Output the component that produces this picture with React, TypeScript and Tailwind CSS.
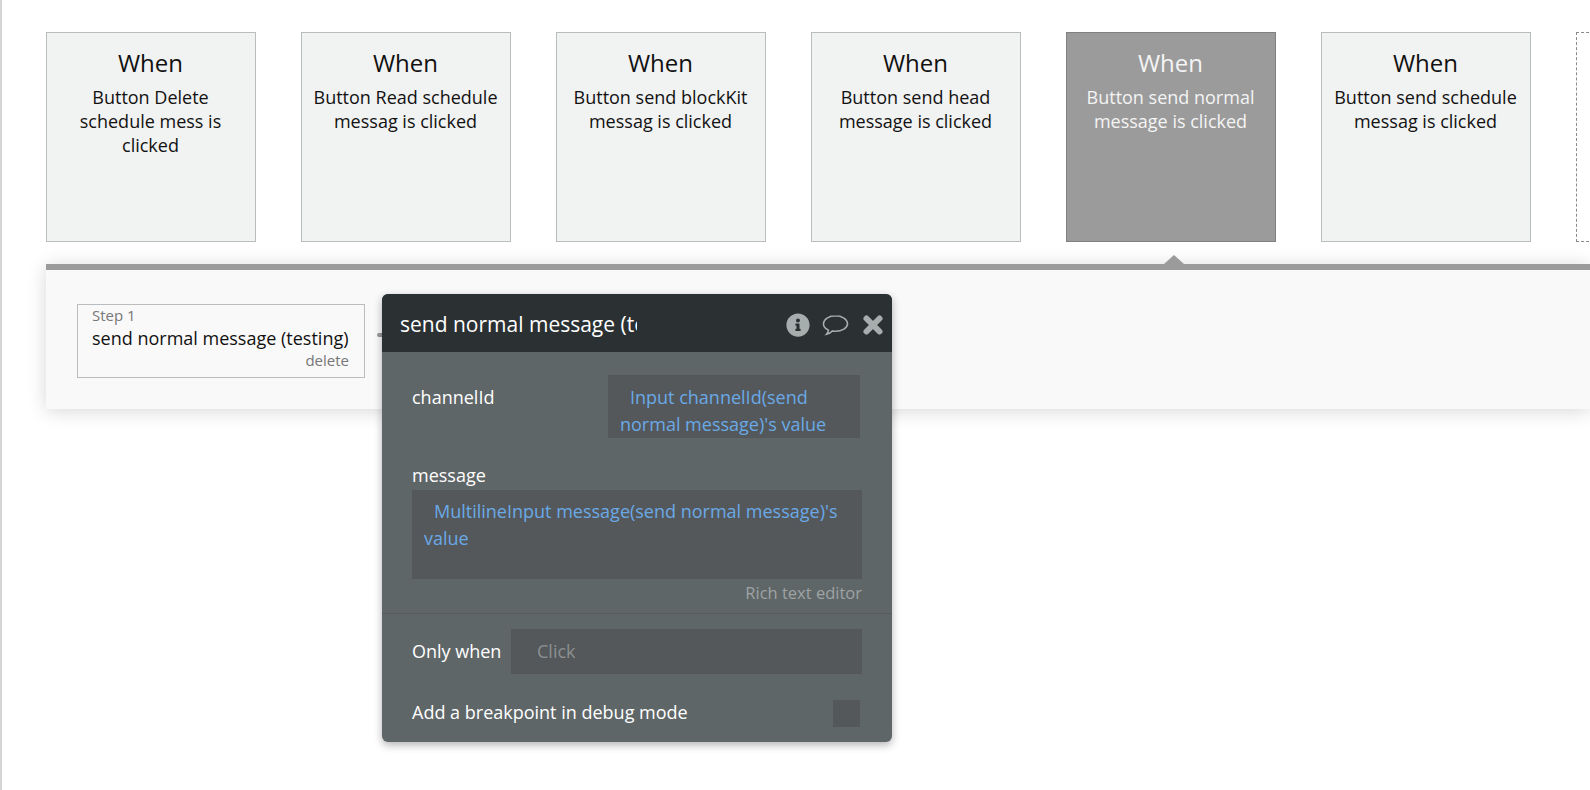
import { FaInfoCircle } from "react-icons/fa";

const cards = [
  { text: "Button Delete schedule mess is clicked" },
  { text: "Button Read schedule messag is clicked" },
  { text: "Button send blockKit messag is clicked" },
  { text: "Button send head message is clicked" },
  { text: "Button send normal message is clicked", active: true },
  { text: "Button send schedule messag is clicked" },
];

function EventCard({ text, active }: { text: string; active?: boolean }) {
  return (
    <div
      className={
        active
          ? "w-[210px] h-[210px] shrink-0 border border-[#7f8080] bg-[#9b9b9b] text-[#f4f4f4] pl-[8px] pr-[9px] pt-[12px] text-center"
          : "w-[210px] h-[210px] shrink-0 border border-[#b9bdbd] bg-[#f1f2f2] text-[#111111] pl-[8px] pr-[9px] pt-[12px] text-center"
      }
    >
      <div className="text-[24px] leading-[36px]">When</div>
      <div className="mt-[4px] text-[18px] leading-[24px]">{text}</div>
    </div>
  );
}

function Popup() {
  return (
    <div className="absolute left-[380px] top-[294px] w-[510px] h-[448px] rounded-[6px] overflow-hidden bg-[#5f6668] text-white shadow-[0_3px_8px_rgba(0,0,0,0.3)]">
      <div className="h-[58px] bg-[#2b3133] flex items-center pl-[18px] pr-[7px] pt-[3px]">
        <div className="w-[237px] overflow-hidden whitespace-nowrap text-[21px]">
          send normal message (testing)
        </div>
        <div className="ml-auto flex items-center text-[#a5adad]">
          <FaInfoCircle className="w-[24px] h-[24px]" />
          <svg viewBox="0 0 28 24" className="ml-[12px] w-[27px] h-[24px]" fill="none" stroke="currentColor" strokeWidth="1.6">
            <path d="M14 2.500C7.400 2.500 1.500 6 1.500 10.800c0 2.800 2.200 5.200 5.200 6.500-.3 1.600-1 3-2 4.200 2.400-.6 4.600-1.800 6.200-3.400 1 .2 2 .3 3.100.3 6.600 0 12.500-3.200 12.500-7.600C26.500 6 20.600 2.500 14 2.500z" />
          </svg>
          <svg viewBox="0 0 24 24" className="ml-[12px] w-[24px] h-[24px]" fill="none" stroke="currentColor" strokeWidth="6" strokeLinecap="round">
            <path d="M5.500 5.500l13 13M18.500 5.500l-13 13" />
          </svg>
        </div>
      </div>

      <div className="px-[30px] pt-[23px]">
        <div className="flex justify-between pr-[2px]">
          <div className="text-[18px] leading-[44px]">channelId</div>
          <div className="w-[252px] h-[63px] bg-[#54585b] pl-[12px] text-[18px] leading-[27px] pt-[9px] overflow-hidden text-[#6aa9e6] indent-[10px]">
            Input channelId(send normal message)'s value
          </div>
        </div>

        <div className="mt-[24px] text-[18px] leading-[26px]">message</div>
        <div className="mt-[2px] h-[89px] bg-[#54585b] px-[12px] pt-[8px] text-[18px] leading-[27px] text-[#6aa9e6] indent-[10px]">
          MultilineInput message(send normal message)'s value
        </div>
        <div className="mt-[2px] text-right text-[16.5px] leading-[24px] text-[#9ea3a4]">Rich text editor</div>
      </div>

      <div className="mt-[8px] border-t border-[#565c5e]" />

      <div className="px-[30px] pt-[15px]">
        <div className="flex items-center">
          <div className="text-[18px] w-[99px]">Only when</div>
          <div className="flex-1 h-[45px] bg-[#54585b] pl-[26px] flex items-center text-[18px] text-[#8b8f90]">Click</div>
        </div>
        <div className="mt-[26px] flex items-start justify-between pr-[2px]">
          <div className="text-[18px] leading-[24px]">Add a breakpoint in debug mode</div>
          <div className="w-[27px] h-[27px] bg-[#54585b]" />
        </div>
      </div>
    </div>
  );
}

export default function App() {
  return (
    <div
      className="relative w-full h-[790px] overflow-hidden bg-white border-l-2 border-[#d5d5d5]"
      style={{ fontFamily: '"Open Sans", sans-serif' }}
    >
      <div className="flex gap-[45px] pl-[44px] pt-[32px]">
        {cards.map((c) => (
          <EventCard key={c.text} text={c.text} active={c.active} />
        ))}
        <div className="w-[210px] h-[210px] shrink-0 border border-dashed border-[#8a8a8a]" />
      </div>

      <div className="relative mt-[22px] ml-[44px] h-[145px] bg-[#f9f9f9] border-t-[6px] border-[#9b9b9b] shadow-[0_2px_18px_rgba(0,0,0,0.16)] pl-[31px] pt-[34px]">
        <div className="absolute left-[1118px] top-[-15px] w-0 h-0 border-x-[10px] border-x-transparent border-b-[9px] border-b-[#9b9b9b]" />
        <div className="flex items-start">
          <div className="w-[288px] h-[74px] border border-[#b9bdbd] pl-[14px] pr-[15px]">
            <div className="text-[15px] leading-[20px] text-[#777777]">Step 1</div>
            <div className="mt-[1px] text-[18px] leading-[24px] text-[#111111] whitespace-nowrap">send normal message (testing)</div>
            <div className="text-right text-[15px] leading-[20px] text-[#777777]">delete</div>
          </div>
          <div className="mt-[29px] w-[8px] h-[4px] rounded-full bg-[#999999] ml-[12px]" />
        </div>
      </div>

      <Popup />
    </div>
  );
}
